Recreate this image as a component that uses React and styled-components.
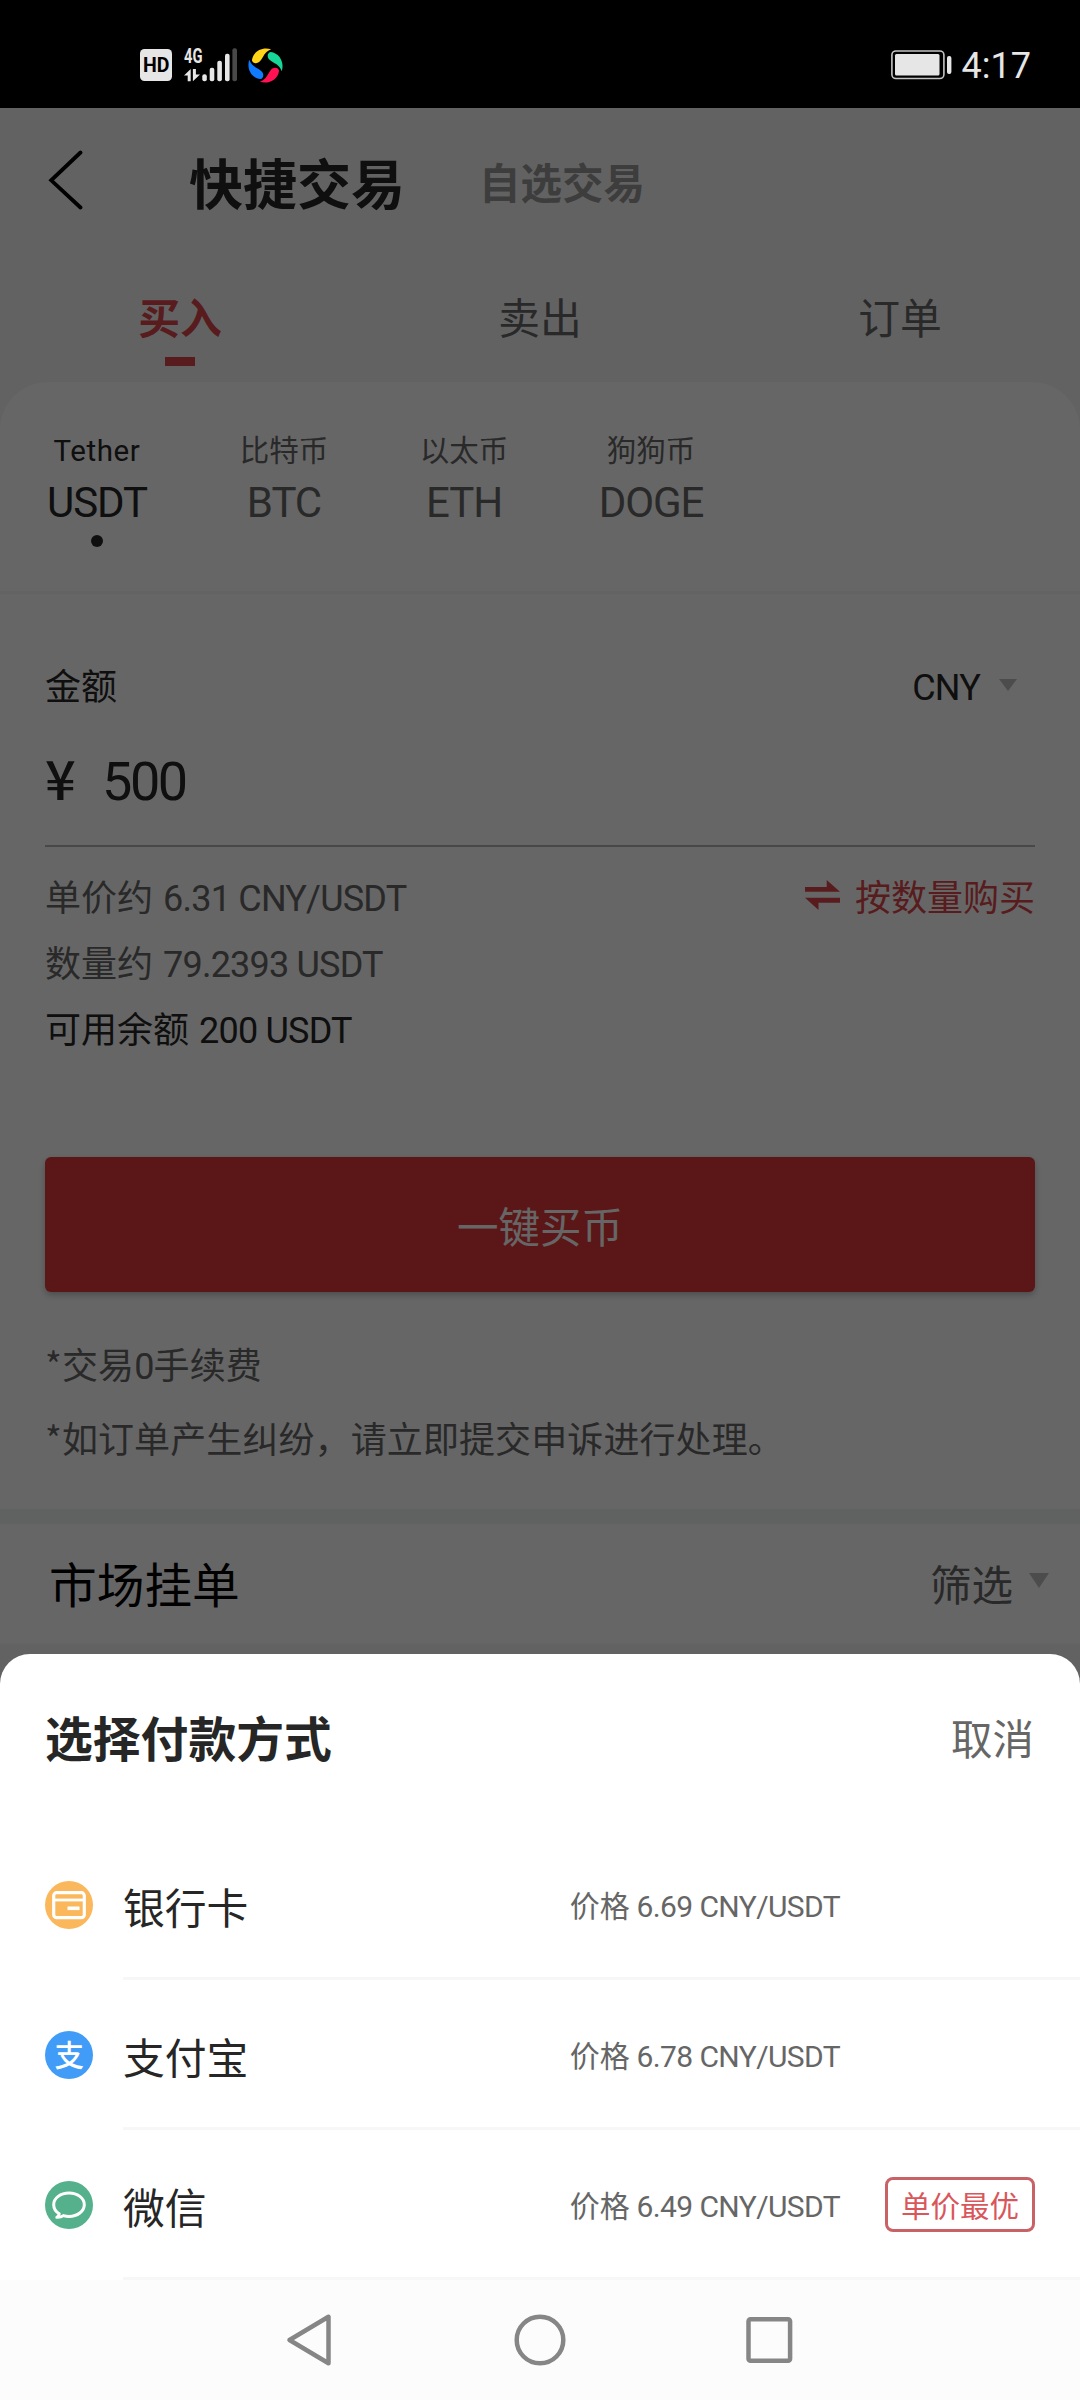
import React from 'react'
import styled, { createGlobalStyle } from 'styled-components'

const color = {
  ink: '#262626',
  grey: '#666',
  light: '#999',
  red: '#e4373a',
  softRed: '#dc484c',
  line: '#f7f7f7',
}

const GlobalStyle = createGlobalStyle`
  * {
    box-sizing: border-box;
  }

  body {
    margin: 0;
    font-family: 'Noto Sans CJK SC', sans-serif;
    color: ${color.ink};
  }
`

const Screen = styled.div`
  width: 1080px;
  height: 2400px;
  display: flex;
  flex-direction: column;
  overflow: hidden;
`

// zero line-height keeps the latin face from stretching the line box
const Num = styled.span`
  margin-left: ${props => props.$gap || 0};
  font-family: Roboto, sans-serif;
  font-weight: 400;
  line-height: 0;
  letter-spacing: ${props => props.$track || '-0.022em'};
`

/* status bar */

const StatusBar = styled.header`
  height: 108px;
  flex: none;
  padding: 22px 49px 0 140px;
  background: #000;
  display: flex;
  justify-content: space-between;
  align-items: center;
`

const StatusGroup = styled.div`
  display: flex;
  align-items: center;
  gap: ${props => props.$gap};
`

const Clock = styled.span`
  padding-top: 2px;
  font-family: Roboto, sans-serif;
  font-size: 36px;
  line-height: 40px;
  color: #e6e6e6;
`

/* page under the scrim */

const Main = styled.main`
  flex: 1;
  position: relative;
  overflow: hidden;
`

const Page = styled.div`
  height: 100%;
  background: #f5f5f5;
`

const TitleBar = styled.div`
  height: 144px;
  padding-left: 48px;
  display: flex;
  align-items: center;
`

const PageTitle = styled.h1`
  margin: 0 0 0 105px;
  padding-top: 3px;
  font-size: 54px;
  line-height: 54px;
  font-weight: 700;
`

const PageLink = styled.span`
  margin-left: 74px;
  padding-top: 2px;
  font-size: 41.5px;
  line-height: 42px;
  font-weight: 700;
  color: ${color.light};
`

const Tabs = styled.nav`
  height: 130px;
  display: grid;
  grid-template-columns: repeat(3, 1fr);
`

const Tab = styled.div`
  padding-top: 43px;
  display: flex;
  flex-direction: column;
  align-items: center;
  font-size: 41.8px;
  line-height: 43px;
  font-weight: ${props => (props.$active ? 700 : 400)};
  color: ${props => (props.$active ? color.softRed : color.grey)};

  &::after {
    content: '';
    width: 30px;
    height: 9px;
    margin-top: 19px;
    background: ${props => (props.$active ? color.softRed : 'transparent')};
  }
`

const Panel = styled.section`
  background: #fff;
  border-radius: 48px 48px 0 0;
`

const Coins = styled.div`
  height: 212px;
  padding: 48px 45px 0;
  display: grid;
  grid-template-columns: 104px 90px 90px 104px;
  column-gap: 90px;
  border-bottom: 3px solid ${color.line};
`

const Coin = styled.div`
  display: flex;
  flex-direction: column;
  align-items: center;
  color: ${props => (props.$active ? color.ink : color.grey)};

  &::after {
    content: '';
    width: 12px;
    height: 12px;
    margin-top: 8px;
    border-radius: 50%;
    background: ${props => (props.$active ? color.ink : 'transparent')};
  }
`

const CoinName = styled.div`
  height: 36px;
  font-size: 29.5px;
  line-height: 36px;
`

const CoinSymbol = styled.div`
  margin-top: 13px;
  font-size: 42px;
  line-height: 48px;
  font-family: Roboto, sans-serif;
  font-weight: 400;
  letter-spacing: -0.025em;
`

const Form = styled.div`
  padding: 60px 45px 0;
`

const FieldHead = styled.div`
  height: 60px;
  display: flex;
  align-items: center;
  justify-content: space-between;
  font-size: 36px;
  line-height: 36px;
`

const Currency = styled.div`
  padding-right: 18px;
  display: flex;
  align-items: center;
  gap: 19px;
`

const AmountField = styled.div`
  height: 133px;
  padding-top: 36px;
  display: flex;
  align-items: baseline;
  border-bottom: 2px solid #b4b4b4;
  font-size: 54px;
  line-height: 54px;
`

const Yen = styled.span`
  width: 57px;
  font-weight: 500;
`

const InfoList = styled.div`
  margin-top: 15px;
`

const InfoRow = styled.div`
  height: 66px;
  display: flex;
  align-items: center;
  justify-content: space-between;
  font-size: 36px;
  line-height: 36px;
  color: ${props => (props.$strong ? color.ink : color.grey)};
`

const SwitchMode = styled.div`
  display: flex;
  align-items: center;
  gap: 15px;
  color: ${color.softRed};
`

const BuyButton = styled.button`
  display: block;
  width: 100%;
  height: 135px;
  margin-top: 97px;
  padding: 0;
  border: 0;
  border-radius: 6px;
  background: ${color.red};
  box-shadow: 0 3px 6px rgba(0, 0, 0, 0.25);
  font-family: inherit;
  font-size: 41.5px;
  color: #fff;
`

const Notes = styled.div`
  padding: 34px 0 35px;
  font-size: 36px;
  line-height: 74px;
  letter-spacing: 0.1px;
  color: ${color.grey};
`

const Note = styled.p`
  margin: 0;
  white-space: nowrap;
`

const Band = styled.div`
  height: 15px;
  background: #f0f5f3;
`

const MarketHead = styled.div`
  height: 121px;
  padding: 0 31px 2px 49px;
  display: flex;
  align-items: center;
  justify-content: space-between;
  background: #fff;
  border-bottom: 2px solid ${color.line};
`

const MarketTitle = styled.h2`
  margin: 0;
  font-size: 47.7px;
  line-height: 48px;
  font-weight: 400;
  color: #000;
`

const Filter = styled.div`
  display: flex;
  align-items: center;
  gap: 16px;
  font-size: 41.5px;
  line-height: 42px;
  color: ${color.grey};
`

const Caret = styled.i`
  border-style: solid;
  border-color: #bebebe transparent transparent;
  border-width: ${props => props.$size * 0.72}px ${props => props.$size / 2}px 0;
  margin-bottom: ${props => props.$lift || 0}px;
`

const Scrim = styled.div`
  position: absolute;
  inset: 0;
  background: rgba(0, 0, 0, 0.6);
`

/* payment sheet */

const Sheet = styled.section`
  position: absolute;
  left: 0;
  right: 0;
  bottom: 0;
  background: #fff;
  border-radius: 30px 30px 0 0;
`

const SheetHead = styled.div`
  height: 176px;
  padding: 0 46px 10px 45px;
  display: flex;
  align-items: center;
  justify-content: space-between;
`

const SheetTitle = styled.h2`
  margin: 0;
  padding-bottom: 1px;
  font-size: 47.8px;
  line-height: 48px;
  font-weight: 700;
`

const Cancel = styled.span`
  font-size: 41.5px;
  line-height: 42px;
  color: ${color.grey};
`

const Method = styled.div`
  height: 150px;
  padding-left: 45px;
  display: flex;
  align-items: center;
  gap: 30px;
`

const MethodBody = styled.div`
  flex: 1;
  height: 150px;
  padding: 3px 45px 0 0;
  display: flex;
  align-items: center;
  border-bottom: 3px solid ${color.line};
`

const MethodName = styled.div`
  flex: 1;
  padding-top: 1px;
  font-size: 41.8px;
  line-height: 42px;
`

const Price = styled.div`
  padding-bottom: 2px;
  font-size: 30px;
  line-height: 30px;
  color: ${color.grey};
`

const BadgeSlot = styled.div`
  width: 150px;
  margin-left: 45px;
`

const Badge = styled.div`
  height: 55px;
  margin-bottom: 2px;
  display: flex;
  align-items: center;
  justify-content: center;
  border: 3px solid #c96266;
  border-radius: 8px;
  font-size: 29.5px;
  line-height: 30px;
  color: #d9575b;
`

/* system navigation */

const NavBar = styled.footer`
  height: 120px;
  flex: none;
  display: flex;
  align-items: center;
  justify-content: center;
  gap: 176px;
  background: #fcfcfc;
`

const HdIcon = () => (
  <svg width="32" height="32" viewBox="0 0 32 32">
    <rect width="32" height="32" rx="4.5" fill="#e6e6e6" />
    <text
      x="3"
      y="23.2"
      fontFamily="Roboto, sans-serif"
      fontWeight="700"
      fontSize="20"
      textLength="26.5"
      lengthAdjust="spacingAndGlyphs"
    >
      HD
    </text>
  </svg>
)

const SignalIcon = () => (
  <svg width="52" height="46" viewBox="0 -6 52 46" fill="#e6e6e6" overflow="visible">
    <text
      x="0"
      y="15"
      fontFamily="Roboto, sans-serif"
      fontWeight="700"
      fontSize="20"
      textLength="18.5"
      lengthAdjust="spacingAndGlyphs"
    >
      4G
    </text>
    <path d="M0 27.5 6.7 21v12.3H3.7v-5.8ZM8.9 21h3v5.5H16l-7.1 6.8Z" />
    <rect x="18.3" y="26.3" width="4.5" height="7" rx="2" />
    <rect x="25.7" y="19.7" width="4.6" height="13.6" rx="2" />
    <rect x="33.3" y="12.7" width="4.6" height="20.6" rx="2" />
    <rect x="41" y="5.7" width="4.6" height="27.6" rx="2" />
    <rect x="48.4" y="0.3" width="4.6" height="33" rx="2" fill="#484848" />
  </svg>
)

const petal = 'M22.5 1.2C14-1.5 5 3 3.8 12 4.5 15.5 9.5 16 12 12.5 15 9 15.5 4 22.5 1.2Z'

const SwirlIcon = () => (
  <svg width="35" height="35" viewBox="0 0 34 34">
    <path d={petal} fill="#ffd317" />
    <path d={petal} fill="#17d798" transform="rotate(90 17 17)" />
    <path d={petal} fill="#ff1152" transform="rotate(180 17 17)" />
    <path d={petal} fill="#0f7bff" transform="rotate(270 17 17)" />
  </svg>
)

const BatteryIcon = () => (
  <svg width="61" height="30" viewBox="0 0 61 30">
    <rect x="0.9" y="1" width="52" height="27.5" rx="4" fill="none" stroke="#c4c4c4" strokeWidth="1.6" />
    <rect x="4" y="4" width="44.5" height="21.5" rx="1.5" fill="#e6e6e6" />
    <rect x="56" y="6" width="4.4" height="18" rx="2" fill="#e6e6e6" />
  </svg>
)

const BackIcon = () => (
  <svg width="36" height="60" viewBox="0 0 36 60" fill="none" stroke="#000" strokeWidth="3.8">
    <path d="M32.5 2.5 3.2 30.3l29.3 27.2" strokeLinecap="round" />
  </svg>
)

const SwapIcon = () => (
  <svg width="35" height="31" viewBox="0 0 35 31" fill="currentColor">
    <path d="M0 7h21.7V0L35 11.8H0ZM35 17.7H0l13.5 12.4v-7.3H35Z" />
  </svg>
)

const CardIcon = () => (
  <svg width="48" height="48" viewBox="0 0 48 48" fill="none" stroke="#fff">
    <circle cx="24" cy="24" r="24" fill="#fab75b" stroke="none" />
    <rect x="8.7" y="11.7" width="30.6" height="25" rx="3" strokeWidth="3.2" />
    <path d="M9 19h30" strokeWidth="2.8" />
    <path d="M22.5 27.3h12" strokeWidth="3.6" />
  </svg>
)

const AlipayIcon = () => (
  <svg width="48" height="48" viewBox="0 0 48 48">
    <circle cx="24" cy="24" r="24" fill="#409cf7" />
    <text
      x="24.3"
      y="35.2"
      textAnchor="middle"
      fontFamily="'Noto Sans CJK SC', sans-serif"
      fontWeight="500"
      fontSize="29.5"
      fill="#fff"
    >
      支
    </text>
  </svg>
)

const WechatIcon = () => (
  <svg width="48" height="48" viewBox="0 0 48 48">
    <circle cx="24" cy="24" r="24" fill="#54b18c" />
    <path
      d="M14.2 32.8C10.8 30.6 8.7 27.4 8.7 23.7 8.7 17.2 15.5 12 24 12s15.3 5.2 15.3 11.7S32.5 35.4 24 35.4c-2 0-3.9-.3-5.6-.8-1.8 1.3-4.1 1.9-6.6 1.7 1.2-.6 2.2-2 2.4-3.5Z"
      fill="none"
      stroke="#fff"
      strokeWidth="3"
      strokeLinejoin="round"
    />
  </svg>
)

const coins = [
  { name: <Num $track="0.02em">Tether</Num>, symbol: 'USDT', active: true },
  { name: '比特币', symbol: 'BTC' },
  { name: '以太币', symbol: 'ETH' },
  { name: '狗狗币', symbol: 'DOGE' },
]

const methods = [
  { name: '银行卡', price: '6.69', icon: <CardIcon /> },
  { name: '支付宝', price: '6.78', icon: <AlipayIcon /> },
  { name: '微信', price: '6.49', icon: <WechatIcon />, best: true },
]

const App = () => (
  <Screen>
    <GlobalStyle />
    <StatusBar>
      <StatusGroup $gap="12px">
        <HdIcon />
        <SignalIcon />
        <SwirlIcon />
      </StatusGroup>
      <StatusGroup $gap="10px">
        <BatteryIcon />
        <Clock>4:17</Clock>
      </StatusGroup>
    </StatusBar>

    <Main>
      <Page>
        <TitleBar>
          <BackIcon />
          <PageTitle>快捷交易</PageTitle>
          <PageLink>自选交易</PageLink>
        </TitleBar>
        <Tabs>
          <Tab $active>买入</Tab>
          <Tab>卖出</Tab>
          <Tab>订单</Tab>
        </Tabs>
        <Panel>
          <Coins>
            {coins.map(coin => (
              <Coin key={coin.symbol} $active={coin.active}>
                <CoinName>{coin.name}</CoinName>
                <CoinSymbol>{coin.symbol}</CoinSymbol>
              </Coin>
            ))}
          </Coins>
          <Form>
            <FieldHead>
              <span>金额</span>
              <Currency>
                <span>
                  <Num>CNY</Num>
                </span>
                <Caret $size={18} $lift={-2} />
              </Currency>
            </FieldHead>
            <AmountField>
              <Yen>¥</Yen>
              <Num $track="-0.045em">500</Num>
            </AmountField>
            <InfoList>
              <InfoRow>
                <span>
                  单价约 <Num $gap="2px">6.31 CNY/USDT</Num>
                </span>
                <SwitchMode>
                  <SwapIcon />
                  按数量购买
                </SwitchMode>
              </InfoRow>
              <InfoRow>
                <span>
                  数量约 <Num $gap="2px">79.2393 USDT</Num>
                </span>
              </InfoRow>
              <InfoRow $strong>
                <span>
                  可用余额 <Num $gap="2px">200 USDT</Num>
                </span>
              </InfoRow>
            </InfoList>
            <BuyButton>一键买币</BuyButton>
            <Notes>
              <Note>
                *交易<Num>0</Num>手续费
              </Note>
              <Note>*如订单产生纠纷，请立即提交申诉进行处理。</Note>
            </Notes>
          </Form>
        </Panel>
        <Band />
        <MarketHead>
          <MarketTitle>市场挂单</MarketTitle>
          <Filter>
            筛选
            <Caret $size={21} $lift={4} />
          </Filter>
        </MarketHead>
      </Page>

      <Scrim />

      <Sheet>
        <SheetHead>
          <SheetTitle>选择付款方式</SheetTitle>
          <Cancel>取消</Cancel>
        </SheetHead>
        {methods.map(method => (
          <Method key={method.name}>
            {method.icon}
            <MethodBody>
              <MethodName>{method.name}</MethodName>
              <Price>
                价格 <Num $track="-0.02em">{method.price} CNY/USDT</Num>
              </Price>
              <BadgeSlot>{method.best && <Badge>单价最优</Badge>}</BadgeSlot>
            </MethodBody>
          </Method>
        ))}
      </Sheet>
    </Main>

    <NavBar>
      <svg width="54" height="54" viewBox="0 0 54 54" fill="none" stroke="#868686" strokeWidth="4.5">
        <path d="M45.5 3.8v46.4L6.5 27Z" strokeLinejoin="round" />
      </svg>
      <svg width="54" height="54" viewBox="0 0 54 54" fill="none" stroke="#868686" strokeWidth="4.5">
        <circle cx="27" cy="27" r="23.3" />
      </svg>
      <svg width="54" height="54" viewBox="0 0 54 54" fill="none" stroke="#868686" strokeWidth="4.5">
        <rect x="5.5" y="6.2" width="41.6" height="41.6" rx="2" />
      </svg>
    </NavBar>
  </Screen>
)

export default App
